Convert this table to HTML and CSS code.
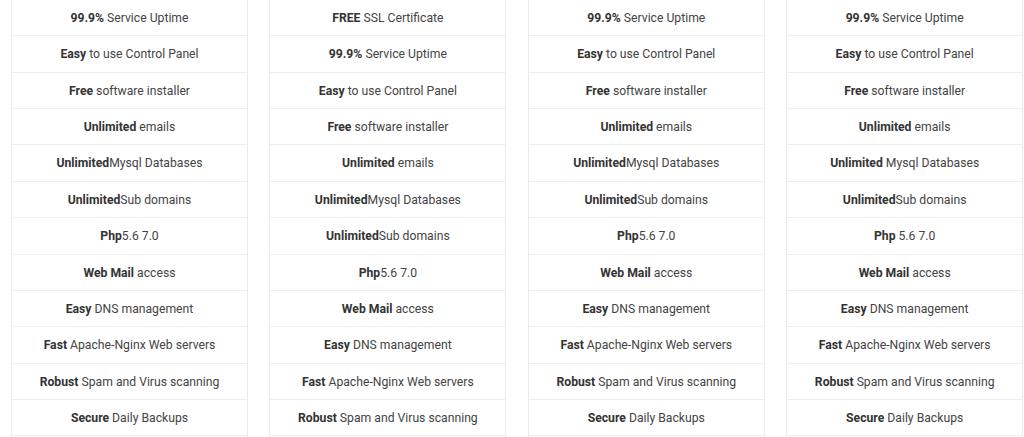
FILE: index.html
```html
<!DOCTYPE html>
<html lang="en">
<head>
<meta charset="utf-8">
<title>Hosting plans features</title>
<link rel="stylesheet" href="styles.css">
</head>
<body>
<div class="plans">
  <ul class="plan">
    <li><b>99.9%</b> Service Uptime</li>
    <li><b>Easy</b> to use Control Panel</li>
    <li><b>Free</b> software installer</li>
    <li><b>Unlimited</b> emails</li>
    <li><b>Unlimited</b>Mysql Databases</li>
    <li><b>Unlimited</b>Sub domains</li>
    <li><b>Php</b>5.6 7.0</li>
    <li><b>Web Mail</b> access</li>
    <li><b>Easy</b> DNS management</li>
    <li><b>Fast</b> Apache-Nginx Web servers</li>
    <li><b>Robust</b> Spam and Virus scanning</li>
    <li><b>Secure</b> Daily Backups</li>
  </ul>
  <ul class="plan">
    <li><b>FREE</b> SSL Certificate</li>
    <li><b>99.9%</b> Service Uptime</li>
    <li><b>Easy</b> to use Control Panel</li>
    <li><b>Free</b> software installer</li>
    <li><b>Unlimited</b> emails</li>
    <li><b>Unlimited</b>Mysql Databases</li>
    <li><b>Unlimited</b>Sub domains</li>
    <li><b>Php</b>5.6 7.0</li>
    <li><b>Web Mail</b> access</li>
    <li><b>Easy</b> DNS management</li>
    <li><b>Fast</b> Apache-Nginx Web servers</li>
    <li><b>Robust</b> Spam and Virus scanning</li>
  </ul>
  <ul class="plan">
    <li><b>99.9%</b> Service Uptime</li>
    <li><b>Easy</b> to use Control Panel</li>
    <li><b>Free</b> software installer</li>
    <li><b>Unlimited</b> emails</li>
    <li><b>Unlimited</b>Mysql Databases</li>
    <li><b>Unlimited</b>Sub domains</li>
    <li><b>Php</b>5.6 7.0</li>
    <li><b>Web Mail</b> access</li>
    <li><b>Easy</b> DNS management</li>
    <li><b>Fast</b> Apache-Nginx Web servers</li>
    <li><b>Robust</b> Spam and Virus scanning</li>
    <li><b>Secure</b> Daily Backups</li>
  </ul>
  <ul class="plan">
    <li><b>99.9%</b> Service Uptime</li>
    <li><b>Easy</b> to use Control Panel</li>
    <li><b>Free</b> software installer</li>
    <li><b>Unlimited</b> emails</li>
    <li><b>Unlimited</b> Mysql Databases</li>
    <li><b>Unlimited</b>Sub domains</li>
    <li><b>Php</b> 5.6 7.0</li>
    <li><b>Web Mail</b> access</li>
    <li><b>Easy</b> DNS management</li>
    <li><b>Fast</b> Apache-Nginx Web servers</li>
    <li><b>Robust</b> Spam and Virus scanning</li>
    <li><b>Secure</b> Daily Backups</li>
  </ul>
</div>
</body>
</html>
```

FILE: styles.css
```css
html, body {
  margin: 0;
  padding: 0;
  background: #ffffff;
}

body {
  font-family: Roboto, "Liberation Sans", Arial, sans-serif;
  font-size: 12.2px;
  color: #444444;
}

.plans {
  display: grid;
  grid-template-columns: repeat(4, 237px);
  column-gap: 21.4px;
  padding-left: 11px;
  height: 437px;
  overflow: hidden;
}

.plan {
  list-style: none;
  margin: 0;
  padding: 0;
  border-left: 1px solid #ebebeb;
  border-right: 1px solid #ebebeb;
}

.plan li {
  display: block;
  height: 34.36px;
  padding-top: 1px;
  line-height: 35.6px;
  text-align: center;
  border-bottom: 1px solid #efefef;
  white-space: nowrap;
}

.plan b {
  font-weight: 700;
  color: #333333;
}
```
